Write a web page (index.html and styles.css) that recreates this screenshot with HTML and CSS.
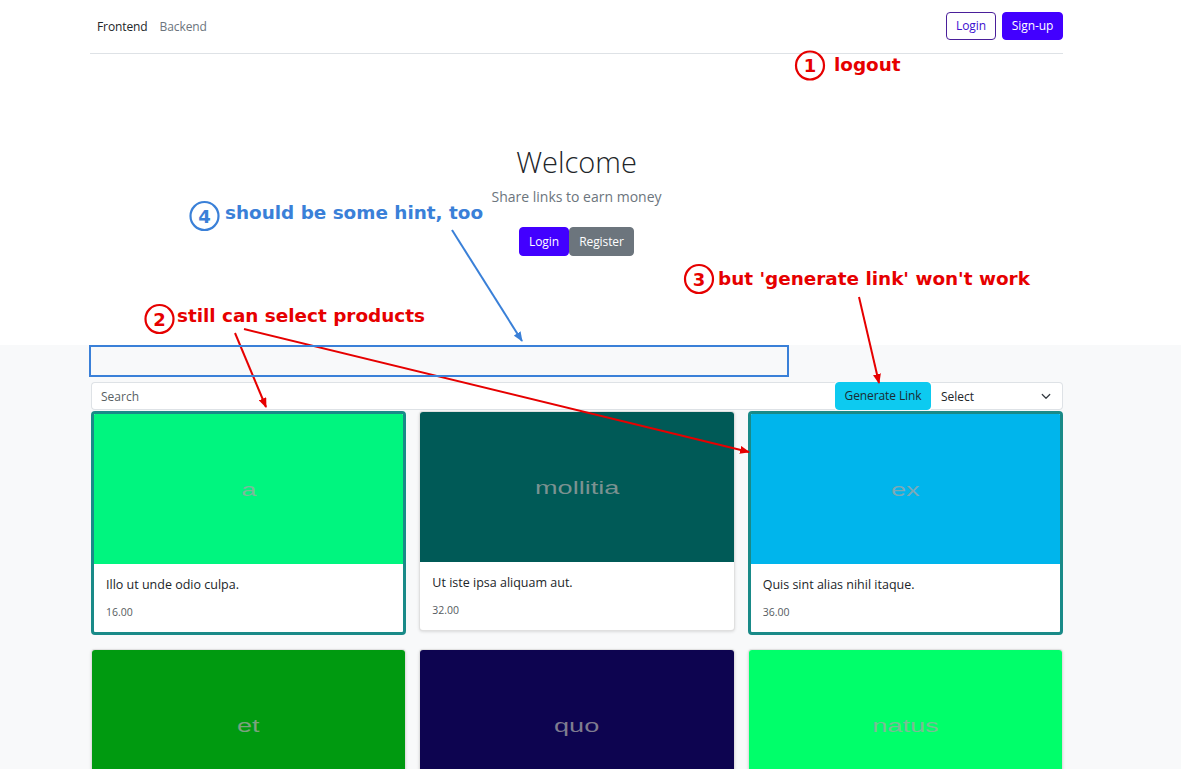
FILE: index.html
```html
<!DOCTYPE html>
<html lang="en">
<head>
<meta charset="utf-8">
<title>Welcome</title>
<link rel="stylesheet" href="styles.css">
</head>
<body>
<div class="top">
  <header class="wrap nav">
    <nav class="nav-links">
      <a class="nav-link active" href="#">Frontend</a>
      <a class="nav-link" href="#">Backend</a>
    </nav>
    <div class="nav-actions">
      <button class="btn btn-outline">Login</button>
      <button class="btn btn-primary btn-signup">Sign-up</button>
    </div>
  </header>
  <section class="hero">
    <h1 class="hero-title">Welcome</h1>
    <p class="hero-sub">Share links to earn money</p>
    <div class="hero-actions">
      <button class="btn btn-primary btn-hero">Login</button>
      <button class="btn btn-secondary btn-hero">Register</button>
    </div>
  </section>
</div>

<main class="band">
  <div class="wrap">
    <div class="toolbar">
      <input class="search" type="text" placeholder="Search">
      <button class="btn btn-info">Generate Link</button>
      <div class="select">
        <span>Select</span>
        <svg width="12" height="12" viewBox="0 0 16 16"><path d="M3 6l5 5 5-5" fill="none" stroke="#343a40" stroke-width="1.6" stroke-linecap="round" stroke-linejoin="round"/></svg>
      </div>
    </div>
    <div class="grid">
      <article class="card selected">
        <div class="card-img" style="background:#00f57f"><span>a</span></div>
        <div class="card-body"><div class="card-title">Illo ut unde odio culpa.</div><div class="card-price">16.00</div></div>
      </article>
      <article class="card">
        <div class="card-img" style="background:#005a57"><span>mollitia</span></div>
        <div class="card-body"><div class="card-title">Ut iste ipsa aliquam aut.</div><div class="card-price">32.00</div></div>
      </article>
      <article class="card selected">
        <div class="card-img" style="background:#00b5ec"><span>ex</span></div>
        <div class="card-body"><div class="card-title">Quis sint alias nihil itaque.</div><div class="card-price">36.00</div></div>
      </article>
      <article class="card">
        <div class="card-img" style="background:#009a10"><span>et</span></div>
      </article>
      <article class="card">
        <div class="card-img" style="background:#0d0450"><span>quo</span></div>
      </article>
      <article class="card">
        <div class="card-img" style="background:#00ff6a"><span>natus</span></div>
      </article>
    </div>
  </div>
</main>

<svg class="notes" width="1181" height="769" viewBox="0 0 1181 769">
  <defs>
    <marker id="ar" markerWidth="10" markerHeight="8" refX="9" refY="4" orient="auto" markerUnits="userSpaceOnUse">
      <path d="M0 0L10 4L0 8z" fill="#e60000"/>
    </marker>
    <marker id="ab" markerWidth="10" markerHeight="8" refX="9" refY="4" orient="auto" markerUnits="userSpaceOnUse">
      <path d="M0 0L10 4L0 8z" fill="#3a80d8"/>
    </marker>
  </defs>
  <g class="red">
    <circle cx="810" cy="65.5" r="14" fill="none" stroke="#e60000" stroke-width="2.2"/>
    <text x="810" y="72" text-anchor="middle" class="num">1</text>
    <text x="834" y="71" class="note">logout</text>

    <circle cx="699" cy="279" r="14" fill="none" stroke="#e60000" stroke-width="2.2"/>
    <text x="699" y="285.5" text-anchor="middle" class="num">3</text>
    <text x="718" y="285" class="note">but 'generate link' won't work</text>
    <line x1="859" y1="297" x2="879" y2="383" stroke="#e60000" stroke-width="2" marker-end="url(#ar)"/>

    <circle cx="159.5" cy="319" r="14" fill="none" stroke="#e60000" stroke-width="2.2"/>
    <text x="159.5" y="325.5" text-anchor="middle" class="num">2</text>
    <text x="177" y="322" class="note">still can select products</text>
    <line x1="235" y1="333" x2="266" y2="407" stroke="#e60000" stroke-width="2" marker-end="url(#ar)"/>
    <line x1="244" y1="329" x2="749" y2="452" stroke="#e60000" stroke-width="2" marker-end="url(#ar)"/>
  </g>
  <g class="blue">
    <circle cx="204.5" cy="216" r="14" fill="none" stroke="#3a80d8" stroke-width="2.2"/>
    <text x="204.5" y="222.5" text-anchor="middle" class="num blue-t">4</text>
    <text x="225" y="219" class="note blue-t">should be some hint, too</text>
    <line x1="452" y1="230" x2="522" y2="341" stroke="#3a80d8" stroke-width="2" marker-end="url(#ab)"/>
    <rect x="90" y="346" width="698" height="30" fill="none" stroke="#3a80d8" stroke-width="2"/>
  </g>
</svg>
</body>
</html>
```

FILE: styles.css
```css
* { box-sizing: border-box; }

body {
  margin: 0;
  font-family: "Open Sans", "Noto Sans", sans-serif;
  color: #212529;
  background: #f8f9fa;
  position: relative;
}

.top { background: #fff; }

.wrap {
  width: 973px;
  margin-left: 90px;
}

.nav {
  display: flex;
  justify-content: space-between;
  align-items: center;
  height: 54px;
  padding: 12px 0 13px;
  border-bottom: 1px solid #dee2e6;
}

.nav-links { display: flex; gap: 12px; padding-left: 7px; }

.nav-link {
  font-size: 12px;
  color: #6c757d;
  text-decoration: none;
  letter-spacing: -0.1px;
}
.nav-link.active { color: #212529; }

.nav-actions { display: flex; gap: 6px; }

.btn {
  font-family: inherit;
  font-size: 12px;
  height: 28px;
  padding: 0 9px;
  border-radius: 4px;
  border: 1px solid transparent;
  cursor: pointer;
  line-height: 26px;
  letter-spacing: -0.1px;
  white-space: nowrap;
}

.btn-outline {
  background: #fff;
  color: #3d0fcf;
  border-color: #4a1f9a;
  width: 50px;
  padding: 0;
}

.btn-primary {
  background: #4200ff;
  color: #fff;
  border-color: #4200ff;
}
.btn-signup { width: 61px; padding: 0; }

.btn-secondary {
  background: #6c757d;
  border-color: #6c757d;
  color: #fff;
}

.hero {
  height: 291px;
  padding-top: 90px;
  text-align: center;
  margin-left: -28px;
}

.hero-title {
  margin: 0;
  font-size: 29px;
  font-weight: 300;
  line-height: 36px;
  color: #212529;
}

.hero-sub {
  margin: 6px 0 0;
  font-size: 14px;
  line-height: 22px;
  color: #6c757d;
}

.hero-actions {
  display: flex;
  justify-content: center;
  margin-top: 19px;
}

.btn-hero { height: 29px; padding: 0; }
.hero-actions .btn-primary { width: 50px; }
.hero-actions .btn-secondary { width: 65px; }

.band {
  padding-top: 37px;
  padding-bottom: 40px;
}

.toolbar {
  display: flex;
  height: 28px;
  margin-left: 1px;
}

.search {
  flex: 1;
  height: 28px;
  border: 1px solid #dee2e6;
  border-right: 0;
  border-radius: 4px 0 0 4px;
  background: #fff;
  font-family: inherit;
  font-size: 12px;
  padding: 0 9px;
  outline: none;
}
.search::placeholder { color: #595f64; }

.btn-info {
  width: 96px;
  background: #0dcaf0;
  border-color: #0dcaf0;
  color: #1b2a33;
  padding: 0;
}

.select {
  width: 132px;
  height: 28px;
  background: #fff;
  border: 1px solid #dee2e6;
  border-left: 0;
  border-radius: 0 4px 4px 0;
  display: flex;
  align-items: center;
  justify-content: space-between;
  padding: 0 10px 0 10px;
  font-size: 12px;
  color: #212529;
}

.grid {
  display: grid;
  grid-template-columns: repeat(3, 1fr);
  column-gap: 13px;
  row-gap: 14px;
  align-items: start;
  margin-top: 1px;
  margin-left: 1px;
}

.card {
  background: #fff;
  border: 1px solid rgba(0, 0, 0, 0.12);
  border-radius: 4px;
  box-shadow: 0 1px 3px rgba(0, 0, 0, 0.12);
  overflow: hidden;
}

.card.selected {
  border: 3px solid #198a88;
  box-shadow: none;
}

.card-img {
  height: 150px;
  display: flex;
  align-items: center;
  justify-content: center;
  overflow: hidden;
}

.card-img span {
  font-family: "Liberation Sans", Arial, sans-serif;
  font-size: 17.5px;
  color: rgba(165, 165, 165, 0.75);
  transform: scaleX(1.55);
  display: inline-block;
  margin-top: 3px;
}

.card-body { padding: 12px; }

.card-title {
  font-size: 12.5px;
  line-height: 18px;
}

.card-price {
  margin-top: 10px;
  font-size: 10.5px;
  line-height: 16px;
  color: #555b60;
}

.notes {
  position: absolute;
  top: 0;
  left: 0;
  pointer-events: none;
}

.notes text {
  font-family: "DejaVu Sans", sans-serif;
  font-weight: bold;
  fill: #e60000;
}
.notes .note { font-size: 18.4px; }
.notes .num { font-size: 18px; }
.notes .blue-t { fill: #3a80d8; }
```
